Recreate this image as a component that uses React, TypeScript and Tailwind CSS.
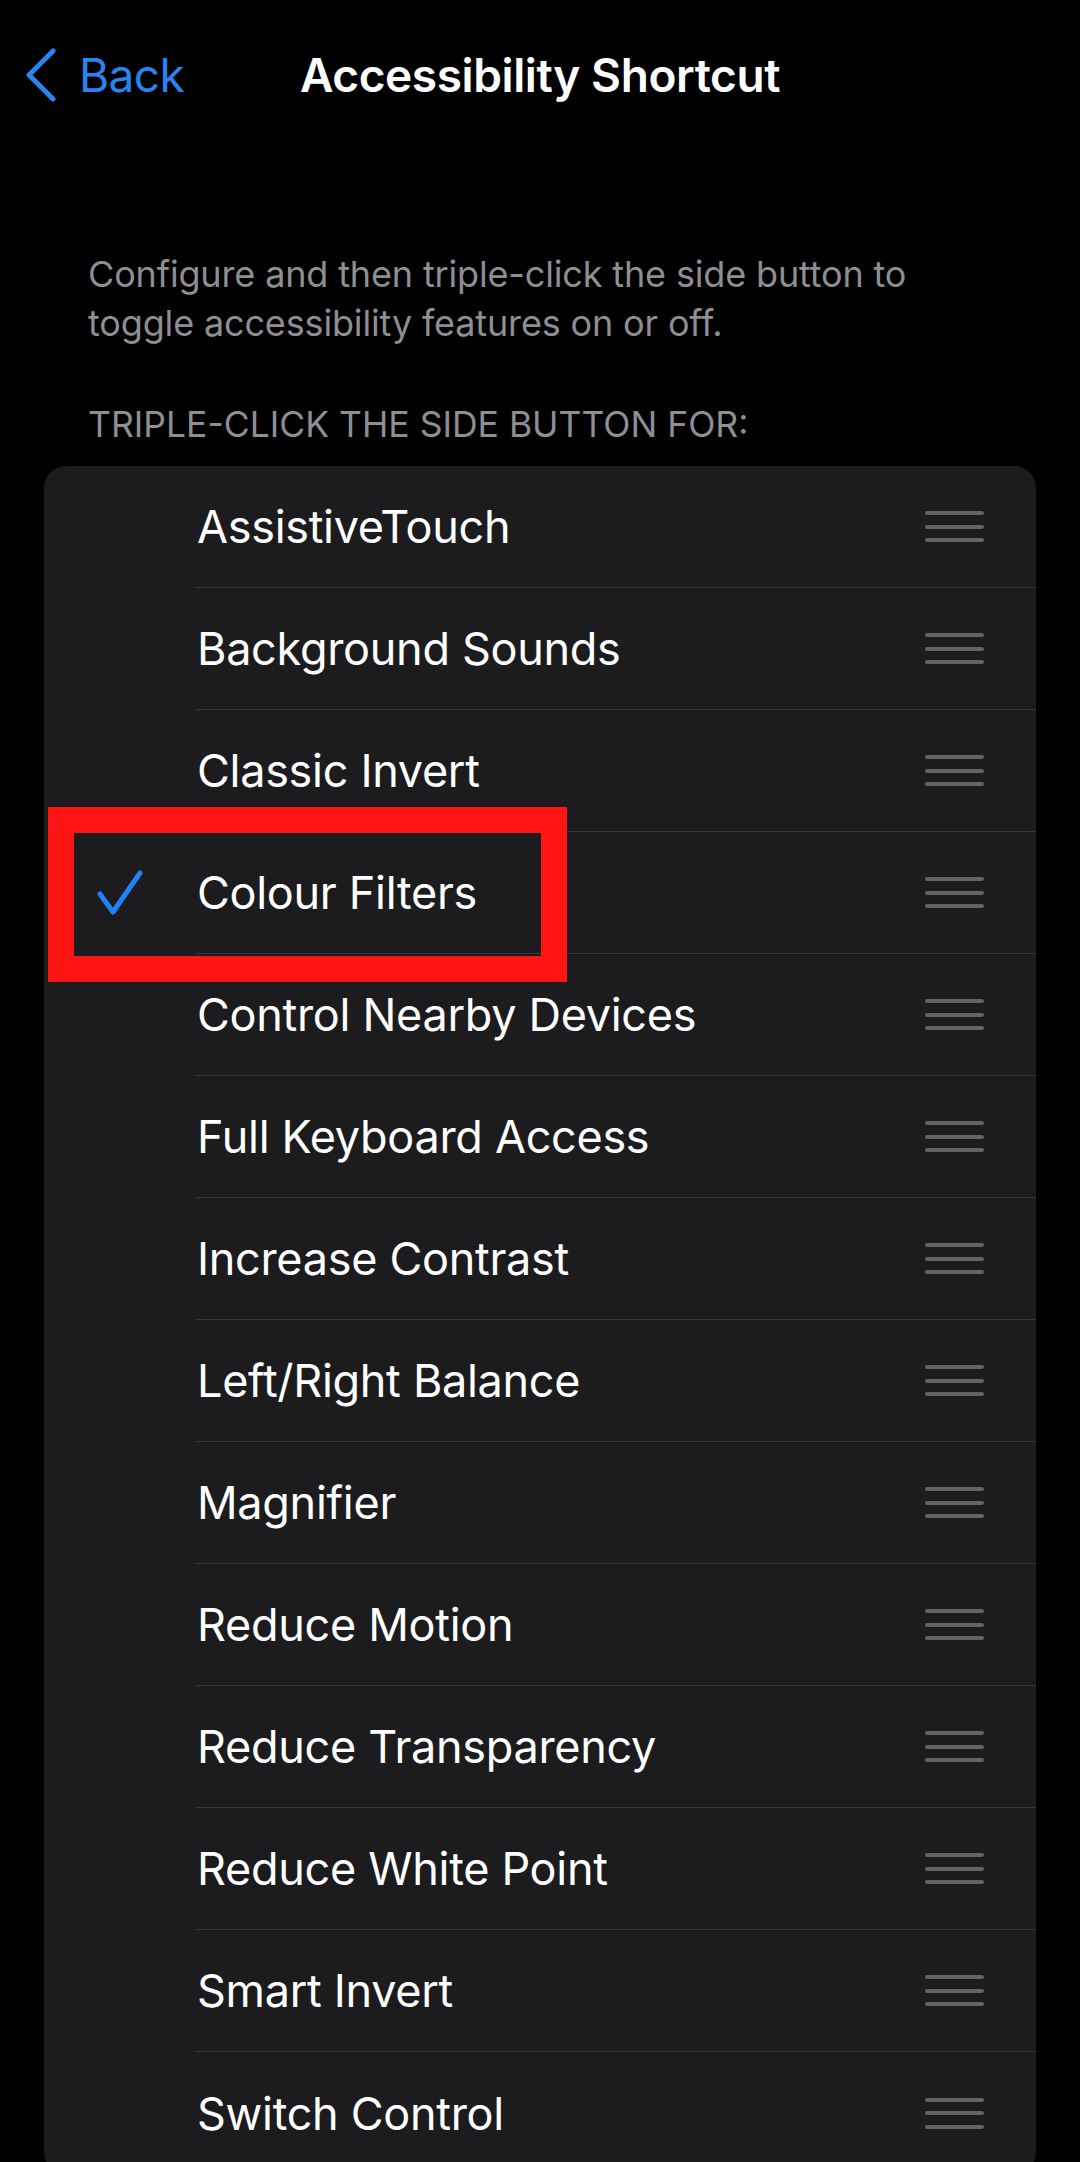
import React from "react";

const items = [
  "AssistiveTouch",
  "Background Sounds",
  "Classic Invert",
  "Colour Filters",
  "Control Nearby Devices",
  "Full Keyboard Access",
  "Increase Contrast",
  "Left/Right Balance",
  "Magnifier",
  "Reduce Motion",
  "Reduce Transparency",
  "Reduce White Point",
  "Smart Invert",
  "Switch Control",
];

function Grabber() {
  return (
    <div className="flex flex-col gap-[9.5px] w-[59px]">
      <div className="h-[4px] w-full bg-[#636366] rounded-full" />
      <div className="h-[4px] w-full bg-[#636366] rounded-full" />
      <div className="h-[4px] w-full bg-[#636366] rounded-full" />
    </div>
  );
}

function Check() {
  return (
    <svg width="46" height="46" viewBox="0 0 46 46" fill="none">
      <polyline
        points="3,24 16,42 43,3"
        stroke="#1e84f5"
        strokeWidth="5"
        strokeLinecap="round"
        strokeLinejoin="round"
      />
    </svg>
  );
}

export default function App() {
  return (
    <div
      className="relative w-[1080px] h-[2162px] bg-black overflow-hidden"
      style={{ fontFamily: "Inter, 'Noto Sans', 'Liberation Sans', sans-serif" }}
    >
      {/* Nav bar */}
      <div className="h-[150px] grid grid-cols-[1fr_auto_1fr] items-center">
        <div className="flex items-center pl-[25px] gap-[22px]">
          <svg width="32" height="54" viewBox="0 0 32 54" fill="none">
            <polyline
              points="28,3 4,27 28,51"
              stroke="#2a84f0"
              strokeWidth="5"
              strokeLinecap="round"
              strokeLinejoin="round"
            />
          </svg>
          <span className="text-[46px] text-[#2a84f0] leading-none tracking-[-0.6px]">Back</span>
        </div>
        <div className="text-[46px] font-semibold text-white leading-none tracking-[-0.4px]">
          Accessibility Shortcut
        </div>
        <div />
      </div>

      {/* Description */}
      <div className="pt-[100px] px-[88px]">
        <p className="text-[36px] leading-[49px] text-[#8e8e93] tracking-[-0.15px]">
          Configure and then triple-click the side button to toggle accessibility features on or off.
        </p>
        <div className="mt-[55px] text-[35.5px] leading-[44px] text-[#8e8e93] uppercase tracking-[0px]">
          Triple-click the side button for:
        </div>
      </div>

      {/* List card */}
      <div className="mt-[19px] mx-[44px] rounded-[22px] bg-[#1c1c1e]">
        {items.map((label, i) => (
          <div key={label} className="flex h-[122px]">
            <div className="w-[152px] flex items-center pl-[53px]">
              {label === "Colour Filters" ? <Check /> : null}
            </div>
            <div
              className={
                "flex-1 flex items-center justify-between pr-[52px] " +
                (i < items.length - 1 ? "border-b border-[#38383a]" : "")
              }
            >
              <span className="text-[45px] text-white leading-none tracking-[-0.3px] pl-[1px]">{label}</span>
              <Grabber />
            </div>
          </div>
        ))}
      </div>

      {/* Red highlight overlay */}
      <div className="absolute left-[48px] top-[807px] w-[519px] h-[175px] border-[26px] border-[#ff1414]" />
    </div>
  );
}
